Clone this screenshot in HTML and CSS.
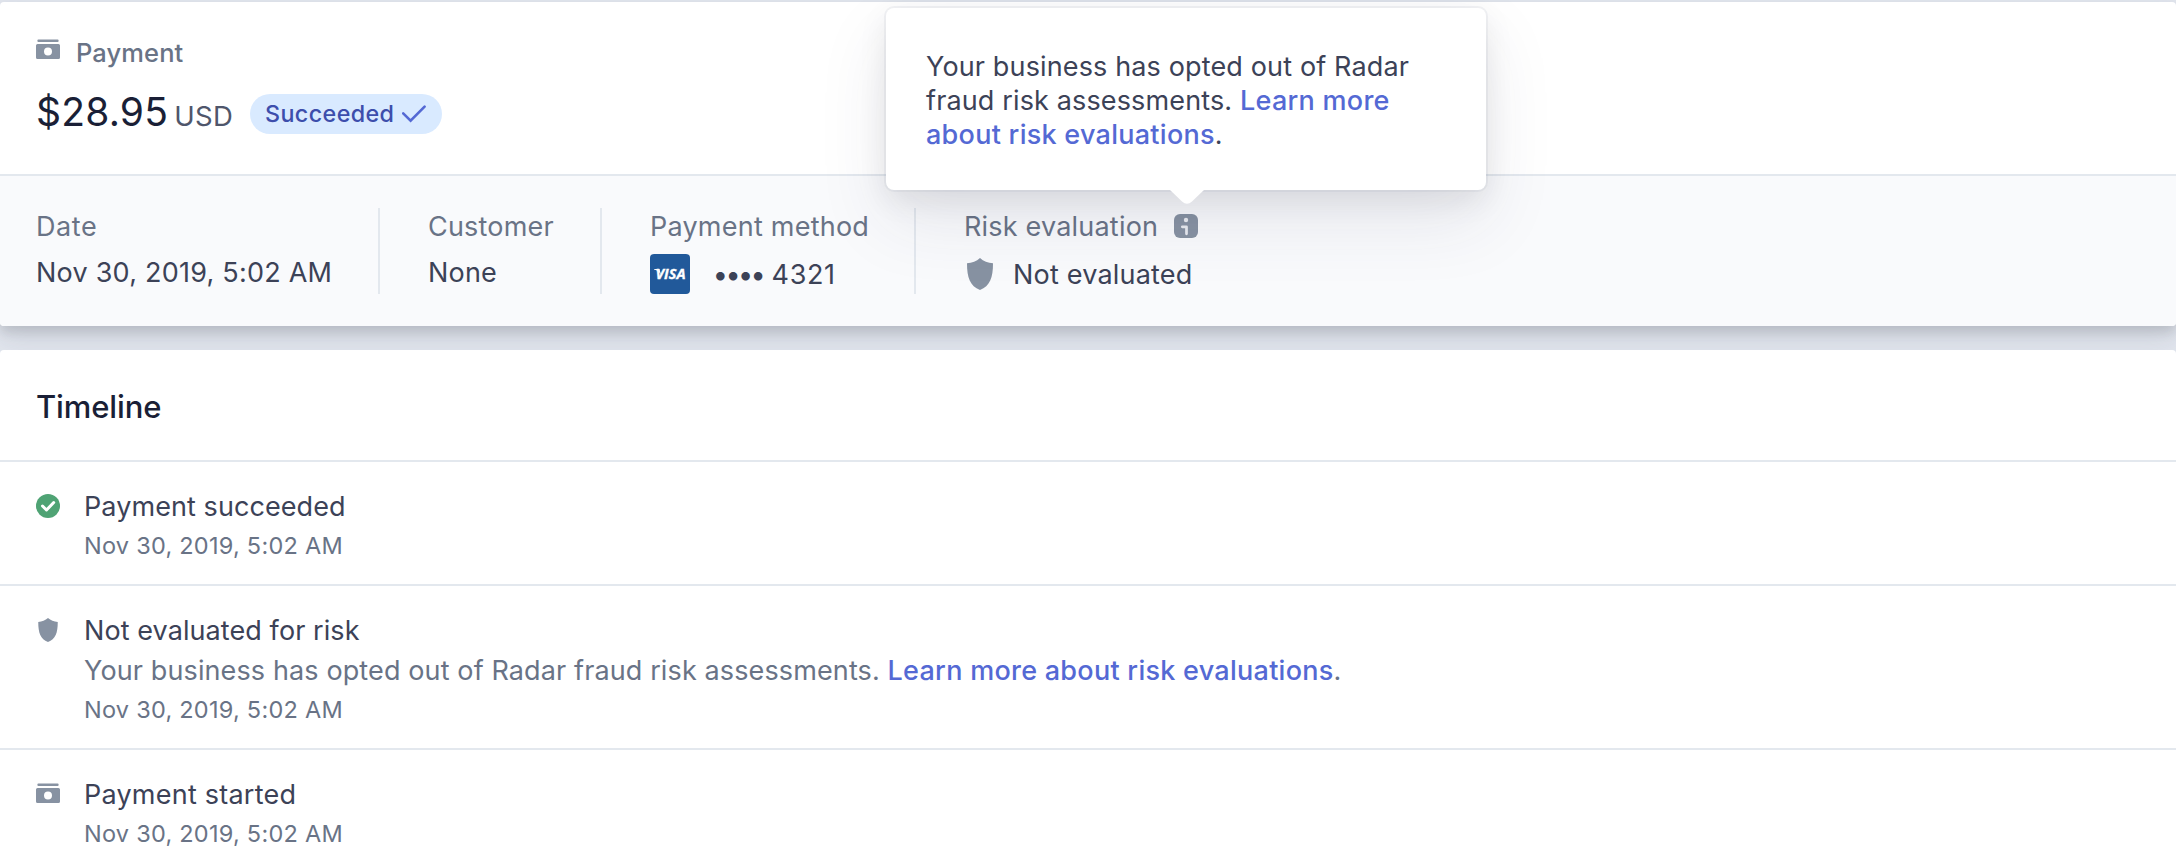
FILE: index.html
```
<!DOCTYPE html>
<html lang="en">
<head>
<meta charset="utf-8">
<title>Payment</title>
<link rel="stylesheet" href="styles.css">
</head>
<body>
<svg class="defs" width="0" height="0" aria-hidden="true">
  <symbol id="cash" viewBox="0 0 24 24"><rect x="1.4" y="1.4" width="21.2" height="2.6" rx="1"/><path fill-rule="evenodd" d="M1.5 6h21A1.5 1.5 0 0 1 24 7.500v12a1.500 1.500 0 0 1-1.500 1.500h-21A1.500 1.500 0 0 1 0 19.500v-12A1.500 1.500 0 0 1 1.500 6zM12 9.500a4 4 0 1 0 0 8 4 4 0 0 0 0-8z"/></symbol>
  <symbol id="shield" viewBox="0 0 26 32"><path d="M13 0C9.500 3.200 5 5 0 5.300 0 20 3 28 13 32 23 28 26 20 26 5.300 21 5 16.500 3.200 13 0z"/></symbol>
</svg>
<main class="page">
  <section class="card payment">
    <header class="summary">
      <div class="kind"><svg class="icon24"><use href="#cash"/></svg><span>Payment</span></div>
      <div class="total">
        <div class="amount"><span class="value">$28.95</span><span class="currency">USD</span></div>
        <div class="pill"><span>Succeeded</span><svg width="24" height="18" viewBox="0 0 24 18"><path d="M1.200 8.400L8.600 15.600 22.600 1.600" fill="none" stroke="#5469d4" stroke-width="2.600" stroke-linecap="round"/></svg></div>
      </div>
    </header>
    <div class="facts">
      <div class="fact date"><div class="label ls-date">Date</div><div class="text ls-wide">Nov 30, 2019, 5:02 AM</div></div>
      <div class="fact customer"><div class="label">Customer</div><div class="text">None</div></div>
      <div class="fact method"><div class="label ls-wide">Payment method</div>
        <div class="row"><svg class="visa" width="40" height="40" viewBox="0 0 40 40"><rect width="40" height="40" rx="4" fill="#21599a"/><path d="M4 15h5.500l1.500 6C9.500 18 7.500 16.200 4 15.500z" fill="#fff"/><text x="5.500" y="25" textLength="30" lengthAdjust="spacingAndGlyphs">VISA</text></svg><span class="dots">••••</span><span class="digits">4321</span></div></div>
      <div class="fact risk"><div class="label with-info"><span>Risk evaluation</span>
        <svg class="icon24" viewBox="0 0 24 24"><rect width="24" height="24" rx="6"/><circle cx="12" cy="6" r="2.200" fill="#e9ebf0"/><path d="M8.300 12.800h4.200v7" fill="none" stroke="#e9ebf0" stroke-width="2.700" stroke-linecap="round" stroke-linejoin="round"/></svg></div>
        <div class="row"><svg class="shield-lg"><use href="#shield"/></svg><span>Not evaluated</span></div></div>
    </div>
    <div class="tooltip" role="tooltip">
      <p>Your business has opted out of Radar fraud risk assessments. <a>Learn more about risk evaluations</a>.</p>
      <svg class="arrow" width="36" height="17" viewBox="0 0 36 17"><path d="M0 2h1L13 13.500q5 4.500 10 0L35 2h1V0H0z" fill="#fff"/></svg>
    </div>
  </section>
  <section class="card timeline">
    <h2>Timeline</h2>
    <div class="event"><svg class="icon24" viewBox="0 0 24 24"><circle cx="12" cy="12" r="12" fill="#4fa374"/><path d="M6.500 12l4 4 7.200-7.500" fill="none" stroke="#fff" stroke-width="3" stroke-linecap="round" stroke-linejoin="round"/></svg>
      <div><div class="title">Payment succeeded</div><time>Nov 30, 2019, 5:02 AM</time></div></div>
    <div class="event"><svg class="icon24"><use href="#shield"/></svg>
      <div><div class="title">Not evaluated for risk</div><div class="detail">Your business has opted out of Radar fraud risk assessments. <a>Learn more about risk evaluations</a>.</div><time>Nov 30, 2019, 5:02 AM</time></div></div>
    <div class="event"><svg class="icon24"><use href="#cash"/></svg>
      <div><div class="title started">Payment started</div><time>Nov 30, 2019, 5:02 AM</time></div></div>
  </section>
</main>
</body>
</html>
```
FILE: styles.css
```
* { box-sizing: border-box; }
body { margin: 0; background: #e2e6ee; font-family: Inter, "Liberation Sans", sans-serif; font-size: 27px; color: #3c4257; }
.defs { position: absolute; }
svg { display: block; flex: none; }
.page { height: 862px; overflow: hidden; padding-top: 2px; display: flex; flex-direction: column; gap: 24px; }
.card { position: relative; background: #fff; border-radius: 4px; }
.payment { z-index: 1; box-shadow: 0 14px 28px rgba(60, 66, 87, .12), 0 6px 12px rgba(0, 0, 0, .12); }
.icon24 { width: 24px; height: 24px; fill: #8792a2; }

.summary { height: 174px; padding: 36px 36px 0; border-bottom: 2px solid #e3e8ee; }
.kind { display: flex; gap: 16px; line-height: 30px; font-size: 25.5px; font-weight: 500; letter-spacing: .1px; color: #697386; }
.total { display: flex; align-items: flex-start; margin-top: 20px; height: 48px; }
.amount { display: flex; align-items: baseline; gap: 6px; line-height: 48px; width: 214px; }
.value { font-size: 39px; letter-spacing: .2px; color: #1a1f36; }
.currency { font-size: 27.5px; letter-spacing: .4px; color: #4f566b; }
.pill { display: flex; align-items: center; gap: 8px; width: 192px; height: 40px; margin-top: 6px; padding-left: 15px; line-height: 40px; border-radius: 20px; background: #d9eaff; color: #3d4eac; font-size: 23.3px; font-weight: 500; letter-spacing: .4px; }

.facts { display: flex; height: 150px; padding: 32px 36px; background: #f9fafc; border-radius: 0 0 4px 4px; line-height: 38px; }
.fact { border-right: 2px solid #e3e8ee; height: 86px; display: flex; flex-direction: column; gap: 10px; letter-spacing: .2px; }
.fact + .fact { padding-left: 48px; }
.date { width: 344px; }
.customer { width: 222px; }
.method { width: 314px; }
.risk { border: 0; }
.label, .text { height: 36px; }
.label { color: #697386; }
.with-info { display: flex; gap: 12px; }
.with-info span { width: 198px; }
.with-info svg { margin-top: 6px; }
.row { display: flex; align-items: center; height: 40px; }
.row span { margin-top: 2px; }
.visa text { font: italic 700 14px "Open Sans", sans-serif; letter-spacing: 0; fill: #fff; stroke: #fff; stroke-width: .3px; }
.dots { width: 58.800px; margin-left: 22.800px; letter-spacing: -2.600px; white-space: nowrap; }
.digits { letter-spacing: .6px; }
.shield-lg { width: 26px; height: 32px; margin: 0 20px 0 3px; fill: #8792a2; }
.ls-wide { letter-spacing: .23px; }
.ls-date { letter-spacing: .6px; }

.tooltip { position: absolute; left: 886px; top: 6px; width: 600px; height: 182px; padding: 42px 40px 0; background: #fff; border-radius: 8px; line-height: 34px; letter-spacing: .14px; box-shadow: 0 0 0 2px rgba(136, 152, 170, .1), 0 30px 70px rgba(49, 49, 93, .1), 0 10px 30px rgba(0, 0, 0, .08); }
.tooltip p { margin: 0; }
.arrow { position: absolute; left: 283px; top: 180px; }
a { color: #5469d4; font-weight: 500; letter-spacing: .27px; }

.timeline { flex: 1; border-radius: 4px 4px 0 0; z-index: 2; }
h2 { margin: 0; padding: 37px 36px 33px; line-height: 40px; font-size: 31px; font-weight: 500; letter-spacing: -.13px; color: #1a1f36; }
.event { display: flex; gap: 24px; padding: 24px 36px 18px; border-top: 2px solid #e3e8ee; line-height: 40px; }
.event .icon24 { margin-top: 8px; }
.title, .detail { height: 40px; line-height: 42px; }
.title { letter-spacing: .08px; }
.started { letter-spacing: .23px; }
.detail { color: #697386; letter-spacing: .12px; }
time { display: block; color: #697386; font-size: 23.5px; letter-spacing: .25px; }
```
